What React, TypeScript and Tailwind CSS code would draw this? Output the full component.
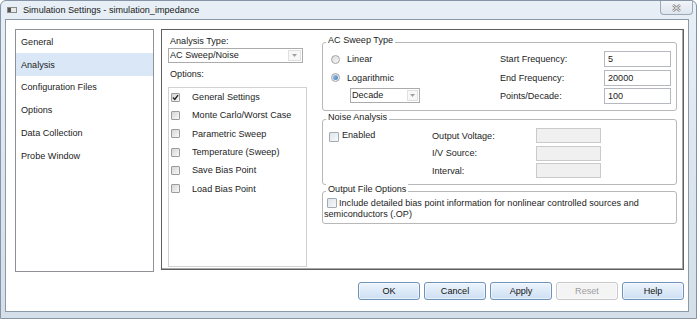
import clsx from 'clsx';

const pages = ['General', 'Analysis', 'Configuration Files', 'Options', 'Data Collection', 'Probe Window'];
const options = ['General Settings', 'Monte Carlo/Worst Case', 'Parametric Sweep', 'Temperature (Sweep)', 'Save Bias Point', 'Load Bias Point'];

function Check({ checked, className }: { checked?: boolean; className?: string }) {
  return (
    <span
      className={clsx(
        'inline-flex h-[9px] w-[9px] shrink-0 items-center justify-center rounded-[1px] border border-[#9c9c9c] bg-gradient-to-br from-[#d6d6d6] to-[#f8f8f8]',
        className,
      )}
    >
      {checked && (
        <svg width="7" height="7" viewBox="0 0 7 7">
          <path d="M1 3.6 L2.8 5.4 L6 1.2" stroke="#222" strokeWidth="1.4" fill="none" />
        </svg>
      )}
    </span>
  );
}

function Radio({ checked }: { checked?: boolean }) {
  return (
    <span className="inline-flex h-[9px] w-[9px] shrink-0 items-center justify-center rounded-full border border-[#a4a4a4] bg-gradient-to-br from-[#dadada] to-[#fafafa]">
      {checked && <span className="h-[5px] w-[5px] rounded-full bg-gradient-to-br from-[#9cc3ea] to-[#3d7fc0]" />}
    </span>
  );
}

function Combo({ text, className, arrow }: { text: string; className: string; arrow: string }) {
  return (
    <div className={clsx('flex h-[15px] border border-[#ababab] bg-white', className)}>
      <span className="flex-1 pl-[1px] leading-[13px]">{text}</span>
      <span className={clsx('m-[1px] flex items-center justify-center border border-[#e0e0e0] bg-[#f7f7f7]', arrow)}>
        <svg width="5" height="3" viewBox="0 0 5 3">
          <path d="M0 0h5L2.5 3z" fill="#a0a0a0" />
        </svg>
      </span>
    </div>
  );
}

function Field({ value, disabled }: { value?: string; disabled?: boolean }) {
  return (
    <div
      className={clsx(
        'flex items-center border pl-[3px]',
        disabled ? 'h-[15px] w-[65px] border-[#cacaca] bg-[#f0f0f0]' : 'h-[16px] w-[67px] border-[#b5b9bf] bg-white',
      )}
    >
      {value}
    </div>
  );
}

function Group({ title, className, children }: { title: string; className: string; children: React.ReactNode }) {
  return (
    <div className={clsx('relative rounded-[3px] border border-[#b8b8b8]', className)}>
      <span className="absolute left-[3px] top-[-9px] bg-white px-[2px] leading-[12px]">{title}</span>
      {children}
    </div>
  );
}

function Btn({ label, disabled }: { label: string; disabled?: boolean }) {
  return (
    <button
      className={clsx(
        'h-[18px] w-[62px] rounded-[3px] border leading-[16px] shadow-[inset_0_0_0_1px_rgba(255,255,255,0.55)]',
        disabled
          ? 'border-[#c6c9cc] bg-[#f4f4f4] text-[#9d9d9d]'
          : 'border-[#6f92b9] bg-gradient-to-b from-[#edf4fc] to-[#cddff3] text-[#111]',
      )}
    >
      {label}
    </button>
  );
}

export default function App() {
  return (
    <div className="h-[319px] w-[700px] bg-white font-['Liberation_Sans',Arial,sans-serif] text-[9.1px] leading-[12px] text-[#1c1c1c]">
      <div className="flex h-[319px] w-[697px] flex-col rounded-t-[6px] border border-[#8594a6] bg-gradient-to-b from-[#e8eff6] via-[#dde6ef] to-[#d4dfea]">
        {/* title bar */}
        <div className="flex h-[18px] items-center">
          <span className="ml-[6px] flex h-[6px] w-[10px] border border-[#8a8a8a] bg-[#e8e8e8]">
            <span className="w-[3px] bg-[#555]" />
          </span>
          <span className="ml-[6px] text-[#1a1a1a]">Simulation Settings - simulation_impedance</span>
          <span className="ml-auto mr-[3px] flex h-[14px] w-[33px] items-center justify-center self-start rounded-b-[4px] border border-t-0 border-[#9ba8b8] bg-gradient-to-b from-[#f2f5f9] to-[#dde5ee]">
            <svg width="9" height="8" viewBox="0 0 9 8">
              <path d="M1 1 L8 7 M8 1 L1 7" stroke="#8a8a8a" strokeWidth="2.6" />
              <path d="M1 1 L8 7 M8 1 L1 7" stroke="#f4f4f4" strokeWidth="1" />
            </svg>
          </span>
        </div>

        {/* client area */}
        <div className="ml-[4px] mr-[7px] flex h-[293px] flex-col border border-[#8c99a8] bg-white pl-[9px] pr-[4px] pt-[9px]">
          <div className="flex items-start">
            <div className="h-[243px] w-[139px] border border-[#8f9297] pt-[0.5px]">
              {pages.map((p) => (
                <div key={p} className={clsx('flex h-[22.8px] items-center pl-[5px]', p === 'Analysis' && 'bg-[#d9e7f7]')}>
                  {p}
                </div>
              ))}
            </div>

            <div className="ml-[7px] flex h-[241px] w-[523px] border border-[#5e5e5e] pl-[6px] shadow-[inset_-1px_-1px_0_#a9a9a9]">
              {/* left column */}
              <div className="flex w-[139px] flex-col">
                <div className="mt-[5px] h-[13px] pl-[2px] leading-[13px]">Analysis Type:</div>
                <Combo text="AC Sweep/Noise" className="w-[135px]" arrow="w-[13px]" />
                <div className="mt-[5px] h-[13px] pl-[2px] leading-[13px]">Options:</div>
                <div className="mt-[6px] h-[180px] w-[139px] border border-[#d2d2d2]">
                  {options.map((o, i) => (
                    <div key={o} className="flex h-[18.3px] items-center pl-[2px]">
                      <Check checked={i === 0} />
                      <span className="ml-[12px]">{o}</span>
                    </div>
                  ))}
                </div>
              </div>

              {/* right column */}
              <div className="ml-[15px] flex w-[355px] flex-col pt-[12px]">
                <Group title="AC Sweep Type" className="h-[69px]">
                  <div className="grid grid-cols-[177px_104px_67px] grid-rows-[18.5px_18.5px_18px] pt-[8px]">
                    <div className="flex h-[16px] items-center pl-[8px]">
                      <Radio />
                      <span className="ml-[7px]">Linear</span>
                    </div>
                    <div className="flex h-[16px] items-center">Start Frequency:</div>
                    <Field value="5" />
                    <div className="flex h-[16px] items-center pl-[8px]">
                      <Radio checked />
                      <span className="ml-[7px]">Logarithmic</span>
                    </div>
                    <div className="flex h-[16px] items-center">End Frequency:</div>
                    <Field value="20000" />
                    <div className="pl-[27px]">
                      <Combo text="Decade" className="w-[70px]" arrow="w-[11px]" />
                    </div>
                    <div className="flex h-[16px] items-center">Points/Decade:</div>
                    <Field value="100" />
                  </div>
                </Group>

                <Group title="Noise Analysis" className="mt-[8px] h-[66px]">
                  <div className="flex pt-[8px]">
                    <div className="flex w-[109px] items-start pl-[6px]">
                      <Check className="mt-[4px] h-[10px] w-[10px] border-[#a3aab2] from-[#dfe6ee] to-[#f7f9fb]" />
                      <span className="ml-[3px] leading-[15px]">Enabled</span>
                    </div>
                    <div className="grid grid-cols-[104px_65px] gap-y-[2.5px]">
                      <div className="flex h-[15px] items-center">Output Voltage:</div>
                      <Field disabled />
                      <div className="flex h-[15px] items-center">I/V Source:</div>
                      <Field disabled />
                      <div className="flex h-[15px] items-center">Interval:</div>
                      <Field disabled />
                    </div>
                  </div>
                </Group>

                <Group title="Output File Options" className="mt-[6px] h-[33px]">
                  <p className="pl-[1px] pt-[6px] leading-[11px]">
                    <Check className="ml-[3px] mr-[2px] h-[10px] w-[10px] align-[-2px] border-[#a3aab2] from-[#dfe6ee] to-[#f7f9fb]" />
                    Include detailed bias point information for nonlinear controlled sources and
                    <br />
                    semiconductors (.OP)
                  </p>
                </Group>
              </div>
            </div>
          </div>

          <div className="mt-[10px] flex justify-end gap-[4px]">
            <Btn label="OK" />
            <Btn label="Cancel" />
            <Btn label="Apply" />
            <Btn label="Reset" disabled />
            <Btn label="Help" />
          </div>
        </div>
      </div>
    </div>
  );
}
